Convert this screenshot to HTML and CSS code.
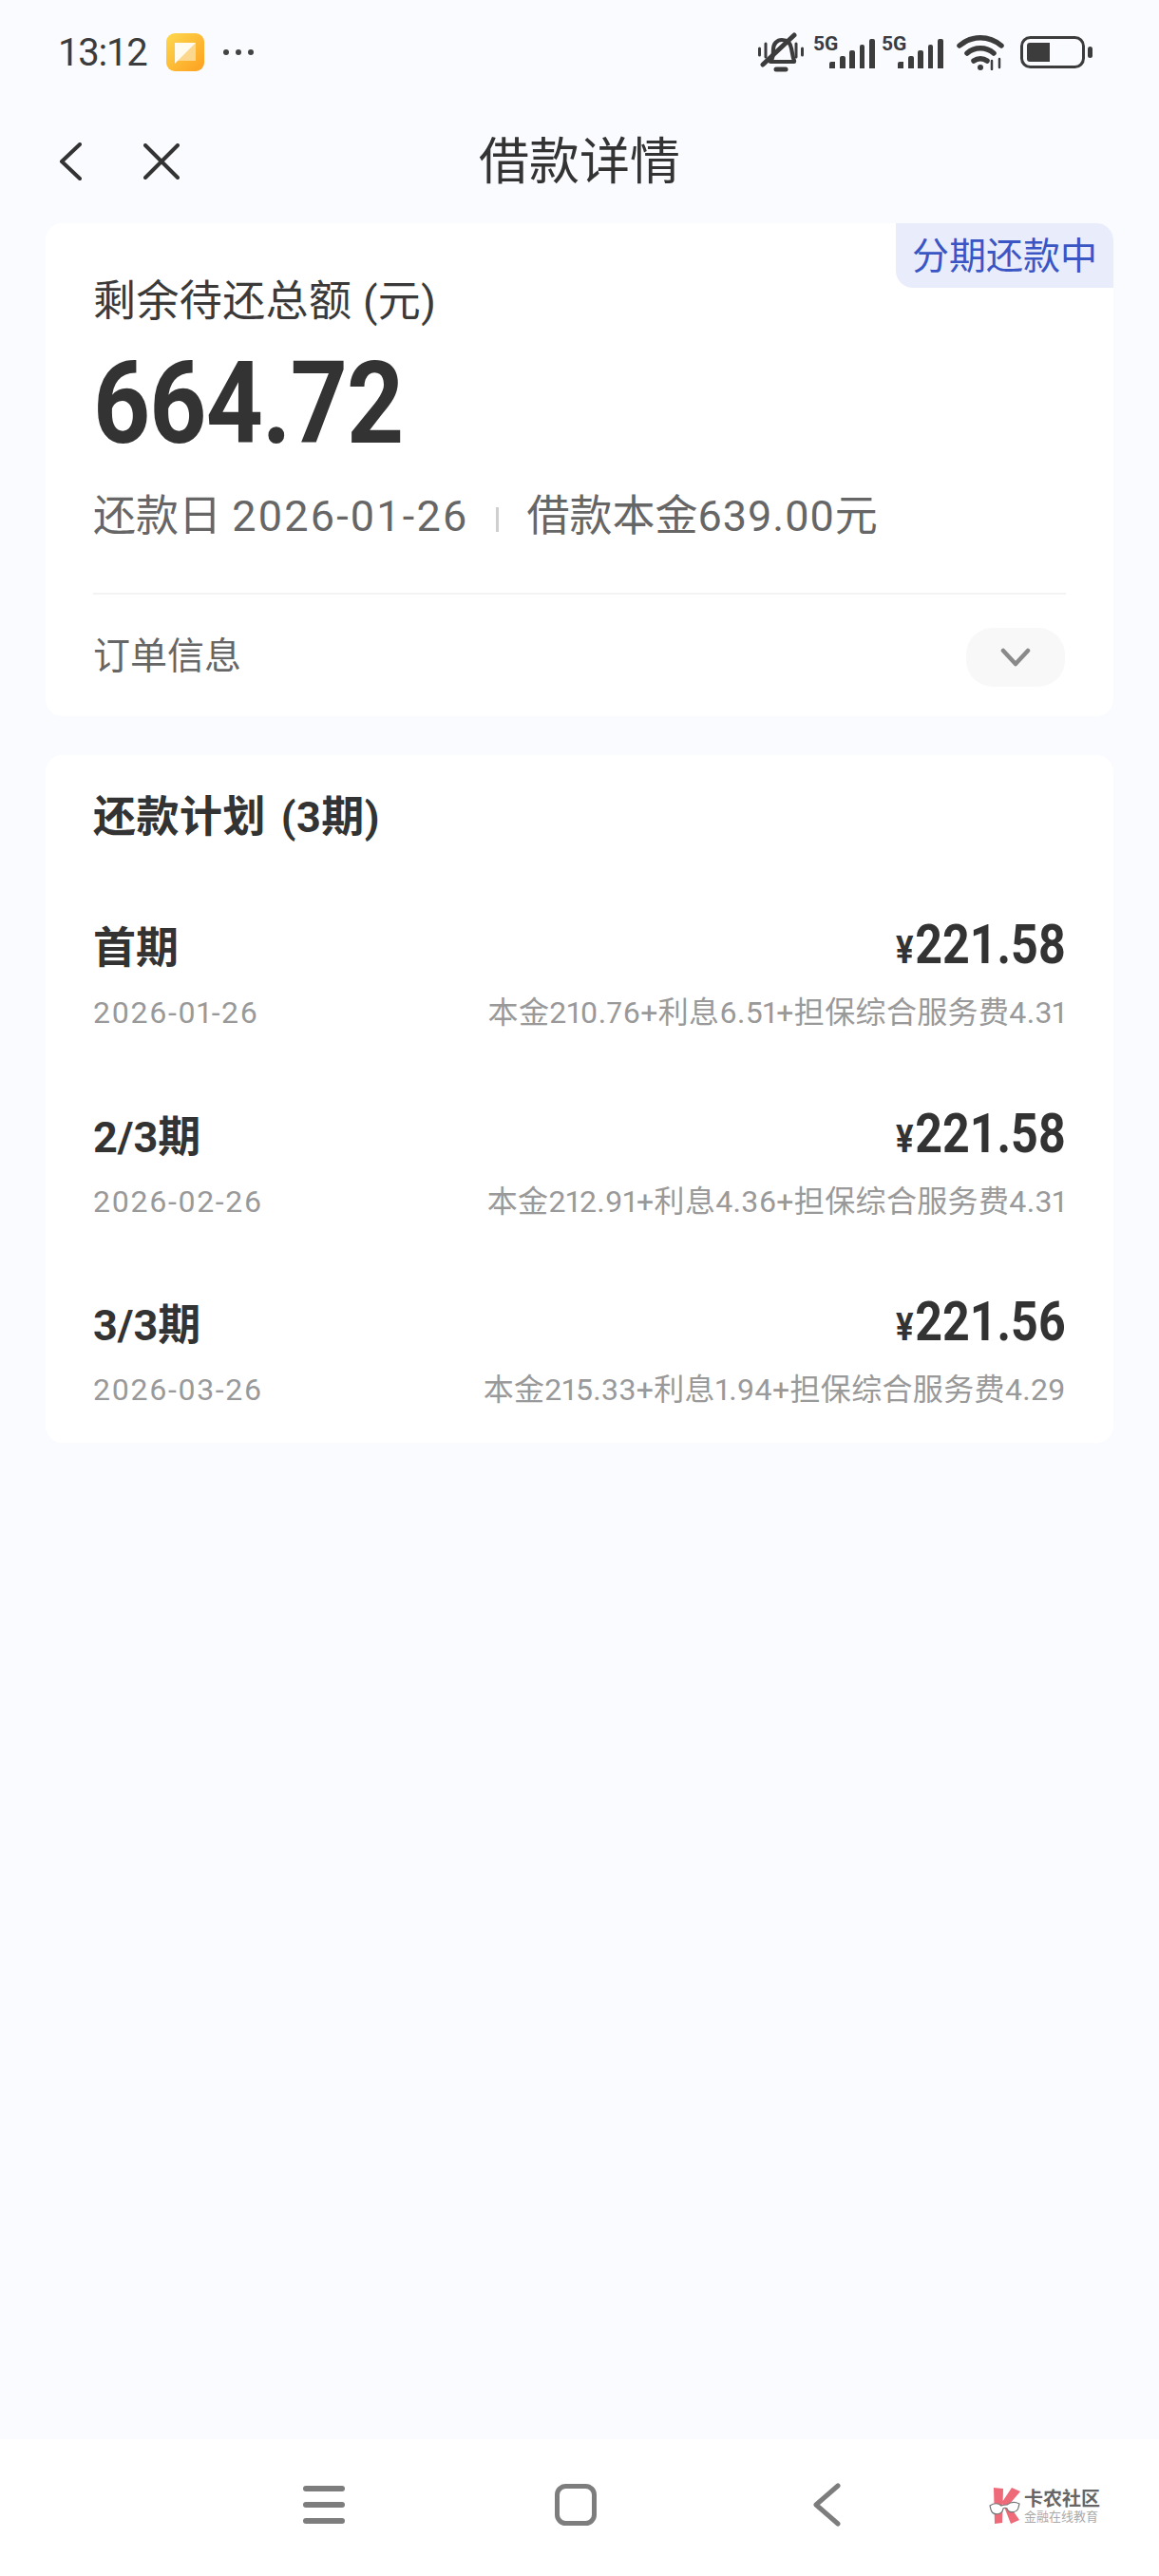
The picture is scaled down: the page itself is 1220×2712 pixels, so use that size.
FILE: index.html
```html
<!DOCTYPE html>
<html lang="zh-CN">
<head>
    <meta charset="UTF-8">
    <meta name="viewport" content="width=device-width, initial-scale=1.0">
    <title>借款详情</title>
    <link rel="stylesheet" href="styles.css">
</head>
<body>
<div class="page">

    <div class="status-bar">
        <div class="status-left">
            <span class="clock">13:12</span>
            <svg class="app-icon" width="40" height="40" viewBox="0 0 40 40">
                <defs>
                    <linearGradient id="appBg" x1="0" y1="0" x2="1" y2="1">
                        <stop offset="0" stop-color="#fdd94f"/>
                        <stop offset="1" stop-color="#fd9f1f"/>
                    </linearGradient>
                </defs>
                <rect width="40" height="40" rx="9" fill="url(#appBg)"/>
                <path d="M9 10h22v19H9z" fill="#fbd88e"/>
                <path d="M9 10h22L9 32z" fill="#fffbee"/>
            </svg>
            <svg width="34" height="8" viewBox="0 0 34 8" fill="#444">
                <circle cx="4" cy="4" r="3"/><circle cx="17" cy="4" r="3"/><circle cx="30" cy="4" r="3"/>
            </svg>
        </div>
        <div class="status-right">
            <svg class="bell" width="48" height="42" viewBox="0 0 48 42" fill="none" stroke="#3c3c3c" stroke-linecap="round" stroke-linejoin="round">
                <path d="M13 31c3-3 3-8 3-13 0-6 4-10 9-10 5 0 9 3 10 9 1 4 1 8 3 13v1z" stroke-width="4.200"/>
                <path d="M19 39h10" stroke-width="5"/>
                <path d="M5 34L38 3" stroke-width="5"/>
                <path d="M1.500 17v7M8 12v14M40 12v14M46.500 17v7" stroke-width="3"/>
            </svg>
            <svg class="signal" width="72" height="42" viewBox="0 0 72 42">
                <text x="0" y="23" class="net-label">5G</text>
                <path d="M17 37a2 2 0 0 1 2-2h4v7h-6zM28 31a2 2 0 0 1 2-2h2a2 2 0 0 1 2 2v11h-6zM38 25a2 2 0 0 1 2-2h2a2 2 0 0 1 2 2v17h-6zM49 19a2 2 0 0 1 2-2h1a2 2 0 0 1 2 2v23h-5zM59 13a2 2 0 0 1 2-2h2a2 2 0 0 1 2 2v29h-6z" fill="#3c3c3c"/>
            </svg>
            <svg class="signal" width="72" height="42" viewBox="0 0 72 42">
                <text x="0" y="23" class="net-label">5G</text>
                <path d="M17 37a2 2 0 0 1 2-2h4v7h-6zM28 31a2 2 0 0 1 2-2h2a2 2 0 0 1 2 2v11h-6zM38 25a2 2 0 0 1 2-2h2a2 2 0 0 1 2 2v17h-6zM49 19a2 2 0 0 1 2-2h1a2 2 0 0 1 2 2v23h-5zM59 13a2 2 0 0 1 2-2h2a2 2 0 0 1 2 2v29h-6z" fill="#3c3c3c"/>
            </svg>
            <svg class="wifi" width="50" height="38" viewBox="0 0 50 38" fill="none" stroke="#3c3c3c" stroke-width="5.500" stroke-linecap="round">
                <path d="M3 12c13-11 31-11 44 0"/>
                <path d="M11 20c8-7 20-7 28 0"/>
                <path d="M18 28c4-3 10-3 14 0"/>
                <circle cx="25" cy="35" r="3" fill="#3c3c3c" stroke="none"/>
                <path d="M37 28v9M45 26v9" stroke-width="2.500"/>
            </svg>
            <svg class="battery" width="76" height="34" viewBox="0 0 76 34">
                <rect x="1.500" y="1.500" width="65" height="31" rx="9" fill="none" stroke="#3c3c3c" stroke-width="3"/>
                <path d="M7 10a3 3 0 0 1 3-3h21v20H10a3 3 0 0 1-3-3z" fill="#3c3c3c"/>
                <rect x="71" y="11" width="5" height="12" rx="2.500" fill="#3c3c3c"/>
            </svg>
        </div>
    </div>

    <div class="nav-bar">
        <div class="nav-icons">
            <svg width="24" height="40" viewBox="0 0 24 40" fill="none" stroke="#333" stroke-width="4" stroke-linecap="round" stroke-linejoin="round">
                <path d="M22 2L3 20l19 18"/>
            </svg>
            <svg width="38" height="38" viewBox="0 0 38 38" fill="none" stroke="#333" stroke-width="4" stroke-linecap="round">
                <path d="M2 2l34 34M36 2L2 36"/>
            </svg>
        </div>
        <h1 class="nav-title">借款详情</h1>
    </div>

    <section class="card summary">
        <span class="status-tag">分期还款中</span>
        <p class="summary-label">剩余待还总额 (元)</p>
        <p class="summary-amount">664.72</p>
        <div class="summary-meta">
            <span>还款日 <span class="meta-date">2026-01-26</span></span>
            <i class="meta-sep"></i>
            <span>借款本金<span class="meta-money">639.00</span>元</span>
        </div>
        <div class="order-row">
            <span class="order-label">订单信息</span>
            <span class="expand-btn">
                <svg width="32" height="20" viewBox="0 0 32 20" fill="none" stroke="#8a8a8a" stroke-width="4.500" stroke-linecap="round" stroke-linejoin="round">
                    <path d="M3 3l13 14L29 3"/>
                </svg>
            </span>
        </div>
    </section>

    <section class="card plan">
        <h2 class="plan-title">还款计划 (3期)</h2>
        <div class="plan-row">
            <div class="plan-top"><span class="plan-name">首期</span><span class="plan-amount"><small>¥</small>221.58</span></div>
            <div class="plan-bottom"><span class="plan-date">2026-01-26</span><span class="plan-detail">本金210.76+利息6.51+担保综合服务费4.31</span></div>
        </div>
        <div class="plan-row">
            <div class="plan-top"><span class="plan-name">2/3期</span><span class="plan-amount"><small>¥</small>221.58</span></div>
            <div class="plan-bottom"><span class="plan-date">2026-02-26</span><span class="plan-detail">本金212.91+利息4.36+担保综合服务费4.31</span></div>
        </div>
        <div class="plan-row">
            <div class="plan-top"><span class="plan-name">3/3期</span><span class="plan-amount"><small>¥</small>221.56</span></div>
            <div class="plan-bottom"><span class="plan-date">2026-03-26</span><span class="plan-detail">本金215.33+利息1.94+担保综合服务费4.29</span></div>
        </div>
    </section>

    <div class="nav-keys">
        <svg class="key-menu" width="44" height="40" viewBox="0 0 44 40" fill="#7d7d7d">
            <rect x="0" y="0" width="44" height="6" rx="3"/>
            <rect x="0" y="17" width="44" height="6" rx="3"/>
            <rect x="0" y="34" width="44" height="6" rx="3"/>
        </svg>
        <svg class="key-home" width="44" height="44" viewBox="0 0 44 44" fill="none" stroke="#7d7d7d" stroke-width="5">
            <rect x="2.500" y="2.500" width="39" height="39" rx="9"/>
        </svg>
        <svg class="key-back" width="30" height="46" viewBox="0 0 30 46" fill="none" stroke="#7d7d7d" stroke-width="5" stroke-linecap="round" stroke-linejoin="round">
            <path d="M27 3L4 23l23 20"/>
        </svg>
        <div class="watermark">
            <svg width="36" height="40" viewBox="0 0 36 40">
                <path d="M6 1l10 1-1 36-8 1zM15 16L25 1l9 4-12 14 11 16-9 4z" fill="#ee6a78"/>
                <path d="M2 20c4-3 9-3 12 0 2-1 4-1 6-1 4-3 9-3 13-1l-1 4c-1 5-10 7-12 1-1-1-3-1-4 0-1 7-11 8-13 1z" fill="#fff" stroke="#777" stroke-width="1.200"/>
            </svg>
            <div class="watermark-text">
                <span class="wm-name">卡农社区</span>
                <span class="wm-sub">金融在线教育</span>
            </div>
        </div>
    </div>

</div>
</body>
</html>
```

FILE: styles.css
```css
* {
    box-sizing: border-box;
}
body {
    margin: 0;
    font-family: Roboto, "Noto Sans CJK SC", sans-serif;
    color: #333;
    background: #fafbff;
}
p, h1, h2 {
    margin: 0;
    font-weight: normal;
}
.page {
    display: flex;
    flex-direction: column;
    height: 2712px;
    overflow: hidden;
}

/* status bar */
.status-bar {
    display: flex;
    justify-content: space-between;
    align-items: center;
    height: 110px;
    padding: 0 70px 0 61px;
}
.status-left {
    display: flex;
    align-items: center;
}
.clock {
    width: 114px;
    font-size: 40px;
    color: #3c3c3c;
    letter-spacing: -1.2px;
}
.app-icon {
    margin-right: 19px;
}
.status-right {
    display: flex;
    align-items: center;
}
.bell {
    margin-right: 10px;
}
.signal {
    margin-bottom: 8px;
    overflow: visible;
}
.net-label {
    font-family: Roboto, sans-serif;
    font-size: 21px;
    font-weight: 700;
    fill: #3c3c3c;
}
.wifi {
    margin-left: 7px;
}
.battery {
    margin-left: 17px;
}

/* title row */
.nav-bar {
    position: relative;
    display: flex;
    align-items: center;
    justify-content: center;
    height: 125px;
    padding-bottom: 3px;
}
.nav-icons {
    position: absolute;
    left: 62px;
    top: 40px;
    display: flex;
    align-items: center;
    gap: 65px;
}
.nav-title {
    font-size: 53px;
    line-height: 1;
    color: #333;
}

/* cards */
.card {
    position: relative;
    margin: 0 48px;
    background: #fff;
    border-radius: 18px;
}
.summary {
    height: 519px;
    padding: 0 50px;
}
.status-tag {
    position: absolute;
    top: 0;
    right: 0;
    width: 229px;
    height: 68px;
    line-height: 70px;
    text-align: center;
    font-size: 39px;
    color: #3a55c4;
    background: #e9edfb;
    border-radius: 0 18px 0 18px;
}
.summary-label {
    padding-top: 55px;
    font-size: 45px;
    line-height: 56px;
    letter-spacing: 0.4px;
    color: #3a3a3a;
}
.summary-amount {
    margin-top: 23px;
    height: 112px;
    font-size: 120px;
    line-height: 112px;
    font-weight: 700;
    color: #333;
    letter-spacing: -1px;
    transform: scaleX(0.875);
    transform-origin: left center;
}
.summary-meta {
    display: flex;
    align-items: center;
    margin-top: 35px;
    font-size: 45px;
    line-height: 56px;
    color: #666;
    padding-bottom: 52px;
    border-bottom: 2px solid #f3f3f3;
}
.meta-date {
    letter-spacing: 2.2px;
}
.meta-money {
    letter-spacing: 1px;
}
.meta-sep {
    width: 3px;
    height: 26px;
    margin: 6px 29px 0 29px;
    background: #cfcfcf;
}
.order-row {
    display: flex;
    justify-content: space-between;
    align-items: center;
    height: 128px;
    font-size: 39px;
    color: #666;
}
.order-label {
    margin-bottom: 6px;
}
.expand-btn {
    display: flex;
    align-items: center;
    justify-content: center;
    width: 104px;
    height: 62px;
    margin-top: 4px;
    margin-right: 1px;
    border-radius: 28px;
    background: #f8f8f8;
}

.plan {
    margin-top: 41px;
    height: 724px;
    padding: 0 50px;
}
.plan-title {
    padding-top: 38px;
    height: 100px;
    font-size: 45px;
    line-height: 56px;
    font-weight: 700;
    word-spacing: 4px;
    letter-spacing: 0.5px;
}
.plan-row {
    height: 198px;
    padding-top: 72px;
}
.plan-row:first-of-type {
    padding-top: 71px;
}
.plan-top,
.plan-bottom {
    display: flex;
    justify-content: space-between;
}
.plan-top {
    align-items: center;
    height: 56px;
}
.plan-name {
    font-size: 45px;
    font-weight: 700;
}
.plan-amount {
    font-size: 58px;
    font-weight: 700;
    transform: scaleX(0.865);
    transform-origin: right center;
}
.plan-amount small {
    font-size: 40px;
    margin-right: 2px;
}
.plan-bottom {
    margin-top: 23px;
    font-size: 32px;
    line-height: 42px;
    color: #999;
    font-variant-numeric: proportional-nums;
}
.plan-date {
    letter-spacing: 1.500px;
}
.plan-detail {
    letter-spacing: 0.35px;
}

/* android keys */
.nav-keys {
    position: relative;
    margin-top: auto;
    height: 144px;
    background: #fff;
}
.nav-keys svg {
    display: block;
}
.key-menu,
.key-home,
.key-back,
.watermark {
    position: absolute;
}
.key-menu {
    left: 319px;
    top: 49px;
}
.key-home {
    left: 584px;
    top: 47px;
}
.key-back {
    left: 855px;
    top: 46px;
}
.watermark {
    left: 1040px;
    top: 50px;
    display: flex;
    align-items: center;
    gap: 2px;
}
.watermark-text {
    display: flex;
    flex-direction: column;
    line-height: 1;
}
.wm-name {
    font-size: 20px;
    font-weight: 700;
    color: #666;
}
.wm-sub {
    margin-top: 2px;
    font-size: 13px;
    color: #aaa;
}
```
